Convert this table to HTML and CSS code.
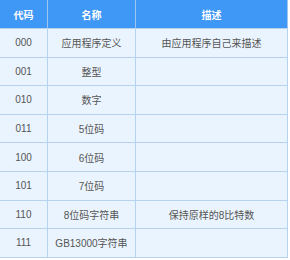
FILE: index.html
```html
<!DOCTYPE html>
<html lang="zh">
<head>
<meta charset="utf-8">
<link rel="stylesheet" href="styles.css">
</head>
<body>
<table class="codes">
  <thead>
    <tr><th class="c1">代码</th><th class="c2">名称</th><th class="c3">描述</th></tr>
  </thead>
  <tbody>
    <tr><td>000</td><td>应用程序定义</td><td>由应用程序自己来描述</td></tr>
    <tr><td>001</td><td>整型</td><td></td></tr>
    <tr><td>010</td><td>数字</td><td></td></tr>
    <tr><td>011</td><td>5位码</td><td></td></tr>
    <tr><td>100</td><td>6位码</td><td></td></tr>
    <tr><td>101</td><td>7位码</td><td></td></tr>
    <tr><td>110</td><td>8位码字符串</td><td>保持原样的8比特数</td></tr>
    <tr><td>111</td><td>GB13000字符串</td><td></td></tr>
  </tbody>
</table>
</body>
</html>
```
FILE: styles.css
```css
html, body {
  margin: 0;
  padding: 0;
  background: #ffffff;
}
body {
  font-family: "Liberation Sans", "Noto Sans CJK SC", sans-serif;
  font-size: 10px;
  color: #555555;
}
.codes {
  border-collapse: collapse;
  width: 289px;
  margin-left: -1px;
  margin-top: -1px;
  table-layout: fixed;
}
.codes th, .codes td {
  text-align: center;
  padding: 0;
  border: 1px solid #b7d2ee;
}
.codes thead tr {
  height: 29px;
}
.codes th {
  background: #3f97f6;
  color: #ffffff;
  font-weight: bold;
  border-color: #9cc6f3;
  border-bottom-color: #b7d2ee;
}
.codes tbody tr {
  height: 28.6px;
}
.codes td {
  background: #eaf4fe;
}
.c1 { width: 47px; }
.c2 { width: 87px; }
.c3 { width: auto; }
```
